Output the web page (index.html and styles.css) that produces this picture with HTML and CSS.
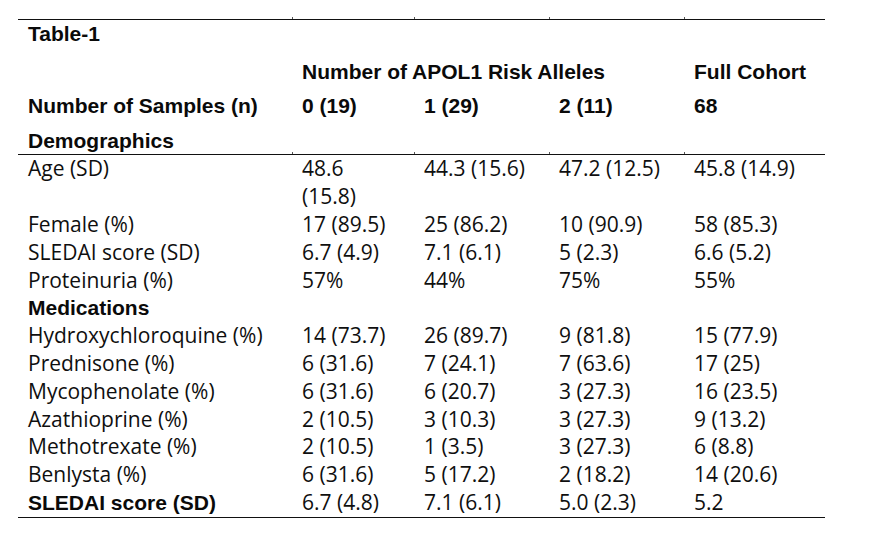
FILE: index.html
```html
<!DOCTYPE html>
<html lang="en">
<head>
<meta charset="utf-8">
<title>Table-1</title>
<link rel="stylesheet" href="styles.css">
</head>
<body>
<table class="tbl">
  <colgroup>
    <col class="c0"><col class="c1"><col class="c2"><col class="c3"><col class="c4">
  </colgroup>
  <tbody>
    <tr class="row-title tick-top">
      <td class="b">Table-1</td><td></td><td></td><td></td><td></td>
    </tr>
    <tr class="row-group">
      <td></td><td class="b" colspan="3">Number of APOL1 Risk Alleles</td><td class="b">Full Cohort</td>
    </tr>
    <tr class="row-n">
      <td class="b">Number of Samples (n)</td><td class="b">0 (19)</td><td class="b">1 (29)</td><td class="b">2 (11)</td><td class="b">68</td>
    </tr>
    <tr class="rule-below tick-above">
      <td class="b">Demographics</td><td></td><td></td><td></td><td></td>
    </tr>
    <tr>
      <td>Age (SD)</td><td>48.6<br>(15.8)</td><td>44.3 (15.6)</td><td>47.2 (12.5)</td><td>45.8 (14.9)</td>
    </tr>
    <tr>
      <td>Female (%)</td><td>17 (89.5)</td><td>25 (86.2)</td><td>10 (90.9)</td><td>58 (85.3)</td>
    </tr>
    <tr>
      <td>SLEDAI score (SD)</td><td>6.7 (4.9)</td><td>7.1 (6.1)</td><td>5 (2.3)</td><td>6.6 (5.2)</td>
    </tr>
    <tr>
      <td>Proteinuria (%)</td><td>57%</td><td>44%</td><td>75%</td><td>55%</td>
    </tr>
    <tr>
      <td class="b">Medications</td><td></td><td></td><td></td><td></td>
    </tr>
    <tr>
      <td>Hydroxychloroquine (%)</td><td>14 (73.7)</td><td>26 (89.7)</td><td>9 (81.8)</td><td>15 (77.9)</td>
    </tr>
    <tr>
      <td>Prednisone (%)</td><td>6 (31.6)</td><td>7 (24.1)</td><td>7 (63.6)</td><td>17 (25)</td>
    </tr>
    <tr>
      <td>Mycophenolate (%)</td><td>6 (31.6)</td><td>6 (20.7)</td><td>3 (27.3)</td><td>16 (23.5)</td>
    </tr>
    <tr>
      <td>Azathioprine (%)</td><td>2 (10.5)</td><td>3 (10.3)</td><td>3 (27.3)</td><td>9 (13.2)</td>
    </tr>
    <tr>
      <td>Methotrexate (%)</td><td>2 (10.5)</td><td>1 (3.5)</td><td>3 (27.3)</td><td>6 (8.8)</td>
    </tr>
    <tr>
      <td>Benlysta (%)</td><td>6 (31.6)</td><td>5 (17.2)</td><td>2 (18.2)</td><td>14 (20.6)</td>
    </tr>
    <tr class="rule-below tick-below">
      <td class="b">SLEDAI score (SD)</td><td>6.7 (4.8)</td><td>7.1 (6.1)</td><td>5.0 (2.3)</td><td>5.2</td>
    </tr>
  </tbody>
</table>
</body>
</html>
```

FILE: styles.css
```css
html, body {
  margin: 0;
  padding: 0;
  background: #ffffff;
}

body {
  font-family: "Open Sans", "Liberation Sans", Arial, sans-serif;
  color: #0f0f0f;
}

.tbl {
  margin: 19px 0 0 18px;
  width: 807px;
  table-layout: fixed;
  border-collapse: separate;
  border-spacing: 0;
}

.c0 { width: 274px; }
.c1 { width: 122px; }
.c2 { width: 135px; }
.c3 { width: 135px; }
.c4 { width: 141px; }

.tbl td {
  position: relative;
  padding: 0 0 0 10px;
  font-size: 21px;
  line-height: 27.8px;
  vertical-align: top;
  white-space: nowrap;
}

.tbl td.b {
  font-family: "Liberation Sans", Arial, sans-serif;
  font-weight: 700;
  font-size: 21px;
  color: #0a0a0a;
}

.row-title td {
  border-top: 1px solid #111111;
  padding-bottom: 9.8px;
}

.row-group td {
  padding-bottom: 6.6px;
}

.row-n td {
  padding-bottom: 6.8px;
}

.rule-below td {
  border-bottom: 1px solid #111111;
}

/* small joint ticks where column boundaries meet the rules */
.tick-top td + td::before,
.tick-above td + td::after,
.tick-below td + td::after {
  content: "";
  position: absolute;
  left: 0;
  width: 1px;
  height: 2px;
  background: #555555;
}

.tick-top td + td::before { top: -3px; }
.tick-above td + td::after { bottom: 0; }
.tick-below td + td::after { bottom: -3px; }
```
